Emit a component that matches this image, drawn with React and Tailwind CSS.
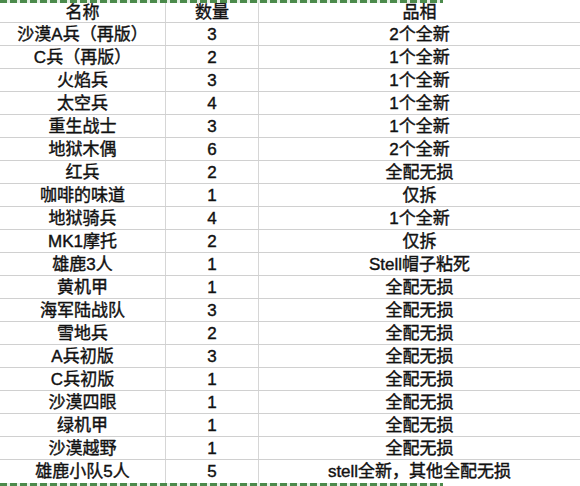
import React from "react";

const rows = [
  ["沙漠A兵（再版）", "3", "2个全新"],
  ["C兵（再版）", "2", "1个全新"],
  ["火焰兵", "3", "1个全新"],
  ["太空兵", "4", "1个全新"],
  ["重生战士", "3", "1个全新"],
  ["地狱木偶", "6", "2个全新"],
  ["红兵", "2", "全配无损"],
  ["咖啡的味道", "1", "仅拆"],
  ["地狱骑兵", "4", "1个全新"],
  ["MK1摩托", "2", "仅拆"],
  ["雄鹿3人", "1", "Stell帽子粘死"],
  ["黄机甲", "1", "全配无损"],
  ["海军陆战队", "3", "全配无损"],
  ["雪地兵", "2", "全配无损"],
  ["A兵初版", "3", "全配无损"],
  ["C兵初版", "1", "全配无损"],
  ["沙漠四眼", "1", "全配无损"],
  ["绿机甲", "1", "全配无损"],
  ["沙漠越野", "1", "全配无损"],
  ["雄鹿小队5人", "5", "stell全新，其他全配无损"],
];

function Row({ cells, header, last }) {
  return (
    <div
      className={`grid grid-cols-[166px_93px_1fr] ${header ? "h-[20px]" : "h-[23px]"} ${last ? "" : "border-b border-[#d0d0d0]"}`}
    >
      {cells.map((c, i) => (
        <div
          key={i}
          className={`flex items-center justify-center leading-none whitespace-nowrap ${i < 2 ? "border-r border-[#d6d6d6]" : ""}`}
        >
          {c}
        </div>
      ))}
    </div>
  );
}

export default function App() {
  return (
    <div
      className="w-[580px] h-[486px] bg-white text-[17px] font-normal text-[#111111] [-webkit-text-stroke:0.4px_#111111] overflow-hidden"
      style={{ fontFamily: '"Liberation Sans", "Noto Sans CJK SC", sans-serif' }}
    >
      <div className="w-[443px] h-[3px] bg-[repeating-linear-gradient(90deg,#4b8a4b_0px,#4b8a4b_7px,#e6efe6_7px,#e6efe6_10px)]" />
      <Row cells={["名称", "数量", "品相"]} header />
      {rows.map((r, i) => (
        <Row key={i} cells={r} last={i === rows.length - 1} />
      ))}
      <div className="w-[443px] h-[4px] bg-[repeating-linear-gradient(90deg,#4b8a4b_0px,#4b8a4b_7px,#e6efe6_7px,#e6efe6_10px)]" />
    </div>
  );
}
